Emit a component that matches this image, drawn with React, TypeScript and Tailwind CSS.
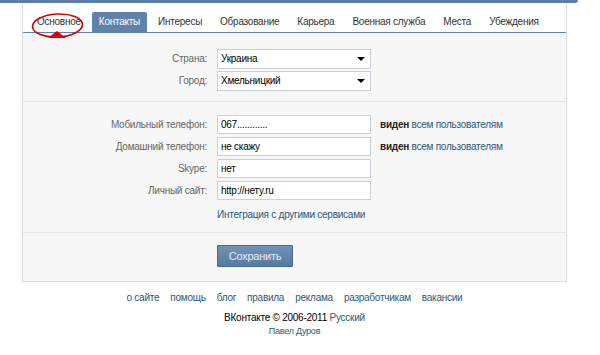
import React from "react"

const tabs = [
  "Основное",
  "Контакты",
  "Интересы",
  "Образование",
  "Карьера",
  "Военная служба",
  "Места",
  "Убеждения",
]

const footerLinks = ["о сайте", "помощь", "блог", "правила", "реклама", "разработчикам", "вакансии"]

function Row({ label, children, note }: { label: string; children: React.ReactNode; note?: boolean }) {
  return (
    <div className="flex items-center h-[19px]">
      <div className="w-[194px] pr-[10px] text-right text-[#666]">{label}</div>
      {children}
      {note && (
        <div className="ml-[9px] text-[#2b587a]">
          <span className="font-bold text-[#222]">виден</span> всем пользователям
        </div>
      )}
    </div>
  )
}

function Field({ value }: { value: string }) {
  return (
    <div className="w-[154px] h-[19px] border border-[#c9d0d8] bg-white px-[3px] flex items-center text-black">
      {value}
    </div>
  )
}

function Select({ value }: { value: string }) {
  return (
    <div className="w-[154px] h-[20px] border border-[#c9d0d8] bg-white pl-[3px] pr-[5px] flex items-center justify-between text-black">
      <span>{value}</span>
      <span className="w-0 h-0 border-l-[4px] border-r-[4px] border-t-[4px] border-l-transparent border-r-transparent border-t-black" />
    </div>
  )
}

export default function App() {
  return (
    <div
      className="relative w-[600px] h-[355px] bg-white overflow-hidden text-[10px] tracking-[-0.25px] leading-none whitespace-nowrap"
      style={{ fontFamily: '"Liberation Sans", Arial, sans-serif' }}
    >
      <div className="h-[3px] w-[578px] bg-[#5b7ea6] rounded-br-[4px]" />

      <div className="ml-[22px] w-[545px] border-x border-b border-[#dcdcdc]">
        <div className="pt-[9px] pl-[7px] bg-white border-b border-[#5e82a8] flex gap-[4px]">
          {tabs.map((t) => (
            <div
              key={t}
              className={
                t === "Контакты"
                  ? "h-[20px] px-[7px] flex items-center bg-[#5e82a8] text-white rounded-t-[2px]"
                  : "h-[20px] px-[7px] flex items-center text-[#333]"
              }
            >
              {t}
            </div>
          ))}
        </div>

        <div className="bg-[#f7f7f7]">
          <div className="pt-[16px] pb-[11px] flex flex-col gap-[3px] border-b border-[#e4e4e4]">
            <Row label="Страна:">
              <Select value="Украина" />
            </Row>
            <Row label="Город:">
              <Select value="Хмельницкий" />
            </Row>
          </div>

          <div className="pt-[13px] pb-[12px] border-b border-[#e4e4e4]">
            <div className="flex flex-col gap-[3px]">
              <Row label="Мобильный телефон:" note>
                <Field value="067............" />
              </Row>
              <Row label="Домашний телефон:" note>
                <Field value="не скажу" />
              </Row>
              <Row label="Skype:">
                <Field value="нет" />
              </Row>
              <Row label="Личный сайт:">
                <Field value="http://нету.ru" />
              </Row>
            </div>
            <div className="ml-[194px] mt-[10px] text-[#2b587a]">Интеграция с другими сервисами</div>
          </div>

          <div className="pt-[12px] pb-[14px] pl-[194px]">
            <button className="w-[76px] h-[22px] border border-[#45688e] bg-gradient-to-b from-[#7192b6] to-[#557aa3] text-[#e8eef5] text-[11px] tracking-[-0.25px] rounded-[1px]">
              Сохранить
            </button>
          </div>
        </div>
      </div>

      <div className="ml-[22px] w-[545px] flex flex-col items-center">
        <div className="mt-[11px] flex gap-[11px] text-[#2b587a]">
          {footerLinks.map((l) => (
            <span key={l}>{l}</span>
          ))}
        </div>
        <div className="mt-[10px] text-black">
          ВКонтакте © 2006-2011 <span className="text-[#2b587a]">Русский</span>
        </div>
        <div className="mt-[4px] text-[9px] text-[#2b587a]">Павел Дуров</div>
      </div>

      <svg className="absolute left-0 top-0" width="100" height="45" viewBox="0 0 100 45">
        <ellipse cx="57.5" cy="25.5" rx="25" ry="11.5" fill="none" stroke="#d40000" strokeWidth="1.6" transform="rotate(-3 57.5 25.5)" />
        <polygon points="48,38 57,31 66,38" fill="#e00000" />
      </svg>
    </div>
  )
}
